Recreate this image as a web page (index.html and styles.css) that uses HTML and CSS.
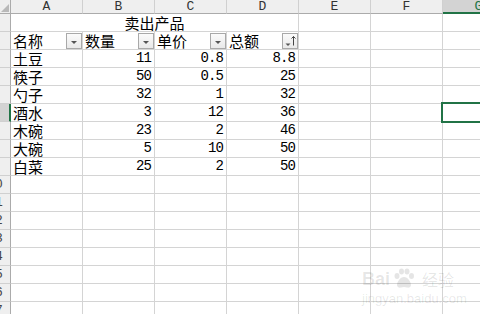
FILE: index.html
```html
<!DOCTYPE html>
<html lang="zh">
<head>
<meta charset="utf-8">
<link rel="stylesheet" href="styles.css">
</head>
<body>
<div class="sheet">
  <div class="corner"><div class="tri"></div></div>
  <div class="ch">A</div><div class="ch">B</div><div class="ch">C</div><div class="ch">D</div><div class="ch">E</div><div class="ch">F</div><div class="ch sel">G</div>

  <div class="rh"><span class="rl">1</span></div><div class="c title">卖出产品</div><div class="c"></div><div class="c"></div><div class="c"></div>
  <div class="rh"><span class="rl">2</span></div>
  <div class="c f"><span>名称</span><span class="btn"><i class="dd"></i></span></div>
  <div class="c f"><span>数量</span><span class="btn"><i class="dd"></i></span></div>
  <div class="c f"><span>单价</span><span class="btn"><i class="dd"></i></span></div>
  <div class="c f"><span>总额</span><span class="btn"><svg width="14" height="14" viewBox="0 0 14 14"><path d="M2.5 9.5h5l-2.5 2.5z" fill="#555"/><path d="M10.5 2.5v9" stroke="#444" stroke-width="1"/><path d="M8.5 4.5l2-2 2 2" stroke="#444" stroke-width="1" fill="none"/></svg></span></div>
  <div class="c"></div><div class="c"></div><div class="c"></div>

  <div class="rh"><span class="rl">3</span></div><div class="c">土豆</div><div class="c n">11</div><div class="c n">0.8</div><div class="c n">8.8</div><div class="c"></div><div class="c"></div><div class="c"></div>
  <div class="rh"><span class="rl">4</span></div><div class="c">筷子</div><div class="c n">50</div><div class="c n">0.5</div><div class="c n">25</div><div class="c"></div><div class="c"></div><div class="c"></div>
  <div class="rh"><span class="rl">5</span></div><div class="c">勺子</div><div class="c n">32</div><div class="c n">1</div><div class="c n">32</div><div class="c"></div><div class="c"></div><div class="c"></div>
  <div class="rh sel"><span class="rl">6</span></div><div class="c">酒水</div><div class="c n">3</div><div class="c n">12</div><div class="c n">36</div><div class="c"></div><div class="c"></div><div class="c active"><div class="cursor"></div></div>
  <div class="rh"><span class="rl">7</span></div><div class="c">木碗</div><div class="c n">23</div><div class="c n">2</div><div class="c n">46</div><div class="c"></div><div class="c"></div><div class="c"></div>
  <div class="rh"><span class="rl">8</span></div><div class="c">大碗</div><div class="c n">5</div><div class="c n">10</div><div class="c n">50</div><div class="c"></div><div class="c"></div><div class="c"></div>
  <div class="rh"><span class="rl">9</span></div><div class="c">白菜</div><div class="c n">25</div><div class="c n">2</div><div class="c n">50</div><div class="c"></div><div class="c"></div><div class="c"></div>
  <div class="rh"><span class="rl">10</span></div><div class="c"></div><div class="c"></div><div class="c"></div><div class="c"></div><div class="c"></div><div class="c"></div><div class="c"></div>
  <div class="rh"><span class="rl">11</span></div><div class="c"></div><div class="c"></div><div class="c"></div><div class="c"></div><div class="c"></div><div class="c"></div><div class="c"></div>
  <div class="rh"><span class="rl">12</span></div><div class="c"></div><div class="c"></div><div class="c"></div><div class="c"></div><div class="c"></div><div class="c"></div><div class="c"></div>
  <div class="rh"><span class="rl">13</span></div><div class="c"></div><div class="c"></div><div class="c"></div><div class="c"></div><div class="c"></div><div class="c"></div><div class="c"></div>
  <div class="rh"><span class="rl">14</span></div><div class="c"></div><div class="c"></div><div class="c"></div><div class="c"></div><div class="c"></div><div class="c"></div><div class="c"></div>
  <div class="rh"><span class="rl">15</span></div><div class="c"></div><div class="c"></div><div class="c"></div><div class="c"></div><div class="c"></div><div class="c"></div><div class="c"></div>
  <div class="rh"><span class="rl">16</span></div><div class="c"></div><div class="c"></div><div class="c"></div><div class="c"></div><div class="c"></div><div class="c"></div><div class="c"></div>
  <div class="rh"><span class="rl">17</span></div><div class="c"></div><div class="c"></div><div class="c"></div><div class="c"></div><div class="c"></div><div class="c"></div><div class="c"></div>
</div>
<div class="watermark">
  <div class="wm-top"><span class="wm-bai">Bai</span><svg class="paw" width="24" height="20" viewBox="0 0 24 20"><ellipse cx="5" cy="8" rx="2.5" ry="3"/><ellipse cx="9.5" cy="3.5" rx="2.5" ry="3"/><ellipse cx="15" cy="3.5" rx="2.5" ry="3"/><ellipse cx="19.5" cy="8" rx="2.5" ry="3"/><path d="M12 9c-4 0-7 5-7 8 0 2 2 3 4 2.5 1-.3 2-.5 3-.5s2 .2 3 .5c2 .5 4-.5 4-2.5 0-3-3-8-7-8z"/></svg><span class="wm-cn">经验</span></div>
  <div class="wm-url">jingyan.baidu.com</div>
</div>
</body>
</html>
```

FILE: styles.css
```css
html, body {
  margin: 0;
  padding: 0;
  background: #fff;
}

body {
  width: 480px;
  height: 314px;
  overflow: hidden;
  position: relative;
}

.sheet {
  display: grid;
  grid-template-columns: 11px repeat(7, 72px);
  grid-template-rows: 14px repeat(17, 18px);
  width: 480px;
  height: 314px;
  overflow: hidden;
}

.corner {
  background: #efefef;
  border-right: 1px solid #ababab;
  border-bottom: 1px solid #ababab;
  box-sizing: border-box;
  display: flex;
  align-items: flex-end;
  justify-content: flex-end;
  padding: 0 1px 1px 0;
}

.tri {
  width: 0;
  height: 0;
  border-left: 8px solid transparent;
  border-bottom: 8px solid #b9b9b9;
}

.ch {
  background: #efefef;
  border-right: 1px solid #d0d0d0;
  border-bottom: 1px solid #ababab;
  box-sizing: border-box;
  text-align: center;
  font: 13px/13px "Liberation Mono", monospace;
  color: #333;
}

.ch.sel {
  background: #d3d3d3;
  border-bottom: 2px solid #217346;
  color: #217346;
}

.rh {
  background: #efefef;
  border-right: 1px solid #ababab;
  border-bottom: 1px solid #d0d0d0;
  box-sizing: border-box;
  overflow: hidden;
  display: flex;
  align-items: center;
}

.rh.sel {
  background: #d3d3d3;
  border-right: 2px solid #217346;
}

.rl {
  display: block;
  flex: none;
  width: 26px;
  margin-left: -18px;
  text-align: center;
  font: 13px/14px "Liberation Mono", monospace;
  color: #444;
}

.c {
  border-right: 1px solid #d4d4d4;
  border-bottom: 1px solid #d4d4d4;
  box-sizing: border-box;
  display: flex;
  align-items: flex-end;
  padding: 0 2px 0 2px;
  font: 15px/16px "Noto Sans CJK SC", sans-serif;
  color: #000;
  white-space: nowrap;
  min-width: 0;
}

.c.title {
  grid-column: span 4;
  justify-content: center;
}

.c.n {
  justify-content: flex-end;
  font: 14px/15px "Liberation Mono", monospace;
  letter-spacing: -0.9px;
  padding-right: 3px;
  padding-bottom: 1px;
}

.c.f {
  justify-content: space-between;
  padding-right: 0;
}

.btn {
  width: 16px;
  height: 16px;
  box-sizing: border-box;
  border: 1px solid #a9a9a9;
  background: linear-gradient(#fbfbfb, #e9e9e9);
  display: flex;
  align-items: center;
  justify-content: center;
  flex: none;
}

.dd {
  display: block;
  width: 0;
  height: 0;
  margin-top: 2px;
  border-left: 3px solid transparent;
  border-right: 3px solid transparent;
  border-top: 3px solid #555;
}

.c.active {
  position: relative;
}

.cursor {
  position: absolute;
  left: -2px;
  top: -2px;
  width: 74px;
  height: 21px;
  box-sizing: border-box;
  border: 2px solid #217346;
}

.watermark {
  position: absolute;
  left: 362px;
  top: 268px;
  color: rgba(0, 0, 0, 0.1);
  font-family: "Liberation Sans", sans-serif;
  pointer-events: none;
}

.wm-top {
  display: flex;
  align-items: flex-end;
  gap: 2px;
}

.wm-bai {
  font: bold 18px/18px "Liberation Sans", sans-serif;
}

.paw {
  fill: rgba(0, 0, 0, 0.1);
}

.wm-cn {
  font: 16px/18px "Noto Sans CJK SC", sans-serif;
  margin-left: 4px;
}

.wm-url {
  font: 13px/14px "Liberation Sans", sans-serif;
  margin-top: 4px;
}
```
